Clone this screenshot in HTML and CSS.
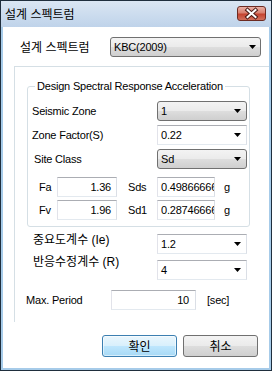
FILE: index.html
```html
<!DOCTYPE html>
<html lang="ko">
<head>
<meta charset="utf-8">
<title>설계 스펙트럼</title>
<link rel="stylesheet" href="styles.css">
</head>
<body>
<div class="window">
  <div class="titlebar">
    <span class="title">설계 스펙트럼</span>
    <div class="close">
      <svg width="27" height="13" viewBox="0 0 27 13">
        <path d="M9.5 3 L17.5 10 M17.5 3 L9.5 10" stroke="#4a1a14" stroke-width="4" stroke-linecap="square" fill="none"/>
        <path d="M9.5 3 L17.5 10 M17.5 3 L9.5 10" stroke="#ffffff" stroke-width="2" stroke-linecap="square" fill="none"/>
      </svg>
    </div>
  </div>
  <div class="client">
    <div class="row-code">
      <span class="ko label-code">설계 스펙트럼</span>
      <div class="combo combo-list combo-code"><span>KBC(2009)</span><svg class="arrow" width="7" height="4" viewBox="0 0 7 4"><polygon points="0,0 7,0 3.5,4" fill="#000"/></svg></div>
    </div>
    <div class="outer-group">
      <div class="group">
        <div class="legend">Design Spectral Response Acceleration</div>
        <div class="grow grow-first">
          <span class="glabel">Seismic Zone</span>
          <div class="combo combo-list combo-s"><span>1</span><svg class="arrow" width="7" height="4" viewBox="0 0 7 4"><polygon points="0,0 7,0 3.5,4" fill="#000"/></svg></div>
        </div>
        <div class="grow">
          <span class="glabel">Zone Factor(S)</span>
          <div class="combo combo-edit combo-s"><span>0.22</span><svg class="arrow" width="7" height="4" viewBox="0 0 7 4"><polygon points="0,0 7,0 3.5,4" fill="#000"/></svg></div>
        </div>
        <div class="grow">
          <span class="glabel glabel-site">Site Class</span>
          <div class="combo combo-list combo-s"><span>Sd</span><svg class="arrow" width="7" height="4" viewBox="0 0 7 4"><polygon points="0,0 7,0 3.5,4" fill="#000"/></svg></div>
        </div>
        <div class="frow frow-first">
          <span class="flabel">Fa</span>
          <div class="edit edit-f">1.36</div>
          <span class="slabel">Sds</span>
          <div class="edit edit-s"><span class="clip">0.49866666</span></div>
          <span class="unit">g</span>
        </div>
        <div class="frow frow-second">
          <span class="flabel">Fv</span>
          <div class="edit edit-f">1.96</div>
          <span class="slabel">Sd1</span>
          <div class="edit edit-s"><span class="clip">0.28746666</span></div>
          <span class="unit">g</span>
        </div>
      </div>
      <div class="krow krow-ie">
        <span class="klabel klabel-ie">중요도계수 (Ie)</span>
        <div class="combo combo-edit combo-s"><span>1.2</span><svg class="arrow" width="7" height="4" viewBox="0 0 7 4"><polygon points="0,0 7,0 3.5,4" fill="#000"/></svg></div>
      </div>
      <div class="krow krow-r">
        <span class="klabel klabel-r">반응수정계수 (R)</span>
        <div class="combo combo-edit combo-s"><span>4</span><svg class="arrow" width="7" height="4" viewBox="0 0 7 4"><polygon points="0,0 7,0 3.5,4" fill="#000"/></svg></div>
      </div>
      <div class="mrow">
        <span class="mlabel">Max. Period</span>
        <div class="edit edit-m">10</div>
        <span class="munit">[sec]</span>
      </div>
    </div>
    <div class="buttons">
      <div class="btn btn-default">확인</div>
      <div class="btn">취소</div>
    </div>
  </div>
</div>
</body>
</html>
```
FILE: styles.css
```css
* { box-sizing: border-box; }
html, body { margin: 0; padding: 0; background: #fff; }
body {
  font-family: "Liberation Sans", "Noto Sans CJK KR", sans-serif;
  font-size: 11px;
  letter-spacing: -0.2px;
  color: #000;
}
.ko { font-family: "Noto Sans CJK KR", sans-serif; font-size: 12px; letter-spacing: 0; }

.window {
  width: 272px;
  height: 371px;
  border: 1px solid #1f2e3d;
  background: #a6cbe9;
  padding: 0 2px 2px;
  display: flex;
  flex-direction: column;
}
.titlebar {
  margin: 0 -2px;
  height: 26px;
  background: linear-gradient(#dae6f3, #bfd3ea);
  display: flex;
  align-items: flex-start;
}
.title {
  font-family: "Noto Sans CJK KR", sans-serif;
  font-size: 12px;
  letter-spacing: 0;
  line-height: 26px;
  padding-left: 4px;
}
.close {
  margin: 5px 5px 0 auto;
  width: 29px;
  height: 15px;
  border: 1px solid #6d2b22;
  border-radius: 3px;
  background: linear-gradient(#eab0a4 0%, #d9806f 45%, #c5432f 55%, #d1705c 100%);
  display: flex;
}
.client {
  flex: 1;
  background: #fff;
  padding-top: 10px;
  display: flex;
  flex-direction: column;
}
.row-code {
  display: flex;
  align-items: center;
  height: 20px;
  padding-left: 17px;
}
.label-code { width: 90px; line-height: 16px; }

.combo {
  height: 20px;
  display: flex;
  align-items: center;
  padding-left: 3px;
  white-space: nowrap;
}
.combo .arrow { margin-left: auto; flex: none; }
.combo-list {
  border: 1px solid #707070;
  border-radius: 3px;
  background: linear-gradient(#f3f3f3 0%, #ebebeb 48%, #dddddd 52%, #cfcfcf 100%);
}
.combo-edit {
  border: 1px solid;
  border-color: #abadb3 #dbdfe6 #e3e9ef #e2e3ea;
  background: #fff;
}
.combo-code { width: 151px; }
.combo-code .arrow { margin-right: 4px; }
.combo-s { width: 90px; }
.combo-s .arrow { margin-right: 5px; }

.outer-group {
  margin: 9px 0 0 11px;
  height: 256px;
  border-left: 1px solid #d5dfe5;
  border-top: 1px solid #d5dfe5;
}
.group {
  margin: 19px 0 0 12px;
  width: 223px;
  border: 1px solid #d5dfe5;
  border-radius: 3px;
  padding-bottom: 6px;
}
.legend {
  margin: -8px 0 0 7px;
  padding: 0 2px;
  width: max-content;
  background: #fff;
  line-height: 14px;
}
.grow {
  display: flex;
  align-items: center;
  height: 20px;
  padding-left: 4px;
  margin-top: 4px;
}
.grow-first { margin-top: 8px; }
.glabel { width: 125px; }
.glabel-site { padding-left: 2px; }

.frow {
  display: flex;
  align-items: center;
  height: 20px;
  padding-left: 11px;
}
.frow-first { margin-top: 8px; }
.frow-second { margin-top: 3px; }
.flabel { width: 18px; }
.slabel { width: 29px; margin-left: 11px; }
.unit { margin-left: 9px; }

.edit {
  height: 20px;
  border: 1px solid;
  border-color: #abadb3 #dbdfe6 #e3e9ef #e2e3ea;
  background: #fff;
  line-height: 18px;
  white-space: nowrap;
  overflow: hidden;
}
.edit-f { width: 60px; text-align: right; padding-right: 5px; }
.edit-s { width: 58px; padding-left: 3px; }
.clip { display: block; width: 53px; overflow: hidden; }
.edit-m { width: 85px; text-align: right; padding-right: 6px; }

.krow {
  display: flex;
  align-items: flex-start;
  height: 20px;
  padding-left: 18px;
}
.krow-ie { margin-top: 7px; }
.krow-r { margin-top: 6px; }
.klabel {
  width: 124px;
  font-size: 12px;
  line-height: 16px;
  letter-spacing: 0;
}
.klabel-ie { margin-top: -2px; }
.klabel-r { margin-top: -6px; }

.mrow {
  display: flex;
  align-items: center;
  height: 20px;
  margin-top: 10px;
  padding-left: 11px;
}
.mlabel { width: 85px; }
.munit { margin-left: 11px; }

.buttons {
  display: flex;
  justify-content: flex-end;
  gap: 6px;
  margin-top: 13px;
  padding-right: 11px;
}
.btn {
  width: 75px;
  height: 22px;
  border: 1px solid #707070;
  border-radius: 3px;
  background: linear-gradient(#f3f3f3 0%, #ebebeb 48%, #dddddd 52%, #cfcfcf 100%);
  font-family: "Noto Sans CJK KR", sans-serif;
  font-size: 12px;
  letter-spacing: 0;
  line-height: 20px;
  text-align: center;
}
.btn-default {
  border-color: #3c7fb1;
  background: linear-gradient(#eaf6fd 0%, #d9f0fc 48%, #bee6fd 52%, #a7d9f5 100%);
  box-shadow: inset 0 0 0 1px rgba(255, 255, 255, 0.55);
}
```
